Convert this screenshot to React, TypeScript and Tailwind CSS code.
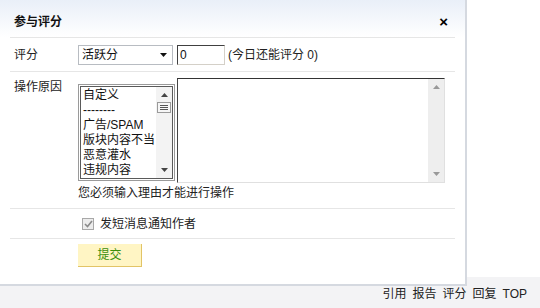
import React from "react";

const reasons = ["自定义", "--------", "广告/SPAM", "版块内容不当", "恶意灌水", "违规内容"];

function UpArrow({ color = "#333" }: { color?: string }) {
  return (
    <svg width="7" height="4" viewBox="0 0 7 4">
      <path d="M0 4 L3.5 0 L7 4 Z" fill={color} />
    </svg>
  );
}

function DownArrow({ color = "#333" }: { color?: string }) {
  return (
    <svg width="7" height="4" viewBox="0 0 7 4">
      <path d="M0 0 L7 0 L3.5 4 Z" fill={color} />
    </svg>
  );
}

function RateDialog() {
  return (
    <div className="absolute left-0 top-0 flex h-[286px] w-[467px] flex-col border-b-2 border-r-2 border-[#d5d9e0] bg-white">
      <div className="flex h-[37px] items-end justify-between bg-gradient-to-b from-[#e9eff8] to-white px-[14px] pb-[7px]">
        <span className="text-[12px] font-bold leading-[16px] text-[#111]">参与评分</span>
        <span className="mr-[3px] text-[15px] font-bold leading-[16px] text-black">×</span>
      </div>

      <div className="mx-[10px] flex flex-col">
        <div className="flex h-[34px] items-center border-t border-[#e6e6e6]">
          <span className="w-[68px] pl-[4px] text-[12px] text-[#222]">评分</span>
          <div className="flex h-[20px] w-[95px] items-center justify-between border border-[#b8bcc2] bg-white pl-[3px] pr-[5px]">
            <span className="text-[12px] text-[#111]">活跃分</span>
            <DownArrow color="#111" />
          </div>
          <div className="ml-[4px] flex h-[20px] w-[48px] items-center border-b border-l border-r border-t border-b-[#d4d0c8] border-l-[#404040] border-r-[#d4d0c8] border-t-[#404040] pl-[2px] text-[12px] text-[#111]">
            0
          </div>
          <span className="ml-[3px] text-[12px] text-[#222]">(今日还能评分 0)</span>
        </div>

        <div className="flex flex-col border-t border-[#e6e6e6] pb-[7px] pt-[6px]">
          <div className="flex items-start">
            <span className="w-[68px] pl-[4px] pt-[1px] text-[12px] leading-[16px] text-[#222]">操作原因</span>
            <div className="mt-[6px] flex h-[97px] w-[97px] border border-[#9a9a9a] p-[1px]">
              <div className="flex flex-1 border border-[#5a5a5a]">
                <div className="flex flex-1 flex-col pl-[2px] pt-[1px]">
                  {reasons.map((r) => (
                    <span key={r} className="whitespace-nowrap text-[12px] leading-[15px] text-[#111]">
                      {r}
                    </span>
                  ))}
                </div>
                <div className="flex w-[16px] flex-col items-center bg-[#f3f3f3] pt-[6px]">
                  <UpArrow color="#444" />
                  <div className="mt-[5px] flex h-[11px] w-[14px] flex-col items-center justify-center gap-[1px] border border-[#9a9a9a] bg-[#f6f6f6]">
                    <span className="h-px w-[8px] bg-[#555]" />
                    <span className="h-px w-[8px] bg-[#555]" />
                    <span className="h-px w-[8px] bg-[#555]" />
                  </div>
                  <div className="flex-1" />
                  <div className="pb-[6px]">
                    <DownArrow color="#444" />
                  </div>
                </div>
              </div>
            </div>
            <div className="ml-[2px] flex h-[105px] w-[268px] border-b border-l border-r border-t border-b-[#e0e0e0] border-l-[#444] border-r-[#e0e0e0] border-t-[#333]">
              <div className="flex-1" />
              <div className="flex w-[16px] flex-col items-center bg-[#eeeeee] pt-[6px]">
                <UpArrow color="#999" />
                <div className="flex-1" />
                <div className="pb-[6px]">
                  <DownArrow color="#999" />
                </div>
              </div>
            </div>
          </div>
          <span className="ml-[68px] mt-[2px] text-[12px] leading-[16px] text-[#222]">您必须输入理由才能进行操作</span>
        </div>

        <div className="flex h-[30px] items-center border-t border-[#e6e6e6] pl-[72px]">
          <div className="flex h-[12px] w-[12px] items-center justify-center border border-[#a8a8a8] bg-[#ececec]">
            <svg width="9" height="8" viewBox="0 0 9 8">
              <path d="M1 4 L3.5 6.5 L8 1" stroke="#8a8a8a" strokeWidth="1.6" fill="none" />
            </svg>
          </div>
          <span className="ml-[6px] text-[12px] text-[#222]">发短消息通知作者</span>
        </div>

        <div className="flex border-t border-[#e6e6e6] pl-[68px] pt-[5px]">
          <button className="flex h-[23px] w-[64px] items-center justify-center border-b border-r border-[#e2c466] bg-[#fff5c4] text-[12px] text-[#3b8f0c]">
            提交
          </button>
        </div>
      </div>
    </div>
  );
}

export default function App() {
  return (
    <div
      className="relative flex h-[308px] w-[540px] flex-col overflow-hidden bg-white"
      style={{ fontFamily: '"Liberation Sans", "Noto Sans CJK SC", sans-serif' }}
    >
      <div className="h-[277px]" />
      <div className="flex h-[31px] items-center justify-end gap-[6px] bg-[#f3f3f5] pr-[13px] pt-[2px] text-[12px] text-[#222]">
        <span>引用</span>
        <span>报告</span>
        <span>评分</span>
        <span>回复</span>
        <span>TOP</span>
      </div>
      <RateDialog />
    </div>
  );
}
